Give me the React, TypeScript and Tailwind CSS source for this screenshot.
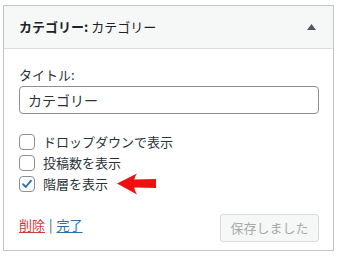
import React from "react";

const font = { fontFamily: '"Noto Sans CJK JP", "Noto Sans", sans-serif' };

function Box({ checked }: { checked?: boolean }) {
  return (
    <span className="w-4 h-4 shrink-0 rounded-[4px] border border-[#8c8f94] bg-white flex items-center justify-center">
      {checked && (
        <svg width="14" height="14" viewBox="0 0 14 14">
          <path d="M3 7.2 L5.8 10 L11 3.6" fill="none" stroke="#2271b1" strokeWidth="1.8" strokeLinecap="round" strokeLinejoin="round" />
        </svg>
      )}
    </span>
  );
}

function Row({ label, checked, arrow }: { label: string; checked?: boolean; arrow?: boolean }) {
  return (
    <div className="flex items-center h-4 gap-2">
      <Box checked={checked} />
      <span className="text-[13px] leading-4 text-[#2c3338]">{label}</span>
      {arrow && (
        <svg width="40" height="22" viewBox="0 0 40 22" className="ml-[1px]">
          <path d="M0 10.5 L20 0.5 Q17 5 17.5 6.5 L39 6 L39 15 L17.5 14.5 Q17 16 20 21.5 Z" fill="#ee1111" />
        </svg>
      )}
    </div>
  );
}

export default function App() {
  return (
    <div className="bg-white w-[343px] h-[257px] pt-[5px] pl-[3px]" style={font}>
      <div className="w-[331px] h-[246px] border border-[#c3c4c7] bg-white flex flex-col">
        <div className="h-[43px] bg-[#f6f7f7] border-b border-[#dcdcde] flex items-center pl-[15px] pr-[17px]">
          <div className="text-[13px] text-[#1d2327] leading-5 flex-1">
            <span className="font-bold">カテゴリー:</span>
            <span className="ml-[3px]">カテゴリー</span>
          </div>
          <svg width="9" height="6" viewBox="0 0 9 6">
            <path d="M4.5 0 L9 6 L0 6 Z" fill="#50575e" />
          </svg>
        </div>
        <div className="flex flex-col pl-[15px] pr-[14px] pt-[17px]">
          <div className="text-[13px] leading-[18px] text-[#2c3338]">タイトル:</div>
          <div className="mt-[2px] h-[28px] w-[300px] rounded-[4px] border border-[#8c8f94] flex items-center pl-[8px] text-[14px] text-[#2c3338]">
            カテゴリー
          </div>
          <div className="mt-[20px] flex flex-col gap-[5px]">
            <Row label="ドロップダウンで表示" />
            <Row label="投稿数を表示" />
            <Row label="階層を表示" checked arrow />
          </div>
          <div className="mt-[22px] flex justify-between items-start w-[300px]">
            <div className="text-[13px] leading-5 mt-[1px] text-[#50575e]">
              <span className="text-[#d63638] underline underline-offset-2">削除</span>
              <span className="mx-[4px]">|</span>
              <span className="text-[#2271b1] underline underline-offset-2">完了</span>
            </div>
            <div className="h-[28px] w-[99px] rounded-[3px] border border-[#dcdcde] bg-[#f6f7f7] flex items-center justify-center text-[13px] text-[#a7aaad]">
              保存しました
            </div>
          </div>
        </div>
      </div>
    </div>
  );
}
